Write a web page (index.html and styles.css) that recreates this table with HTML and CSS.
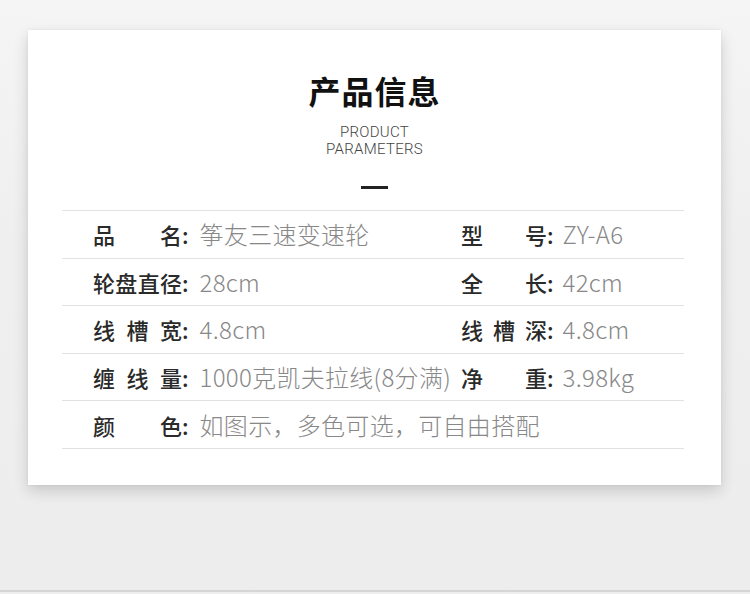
FILE: index.html
```html
<!DOCTYPE html>
<html>

<head>
    <meta charset="utf-8">
    <title>产品信息</title>
    <link rel="stylesheet" href="styles.css">
</head>

<body>
    <div class="page">
        <div class="card">
            <h1 class="title">产品信息</h1>
            <div class="subtitle">PRODUCT<br>PARAMETERS</div>
            <div class="dash"></div>

            <div class="params">
                <div class="row">
                    <div class="cell"><span class="label">品名</span><span class="colon">:</span><span class="value">筝友三速变速轮</span></div>
                    <div class="cell"><span class="label">型号</span><span class="colon">:</span><span class="value">ZY-A6</span></div>
                </div>
                <div class="row">
                    <div class="cell"><span class="label">轮盘直径</span><span class="colon">:</span><span class="value">28cm</span></div>
                    <div class="cell"><span class="label">全长</span><span class="colon">:</span><span class="value">42cm</span></div>
                </div>
                <div class="row">
                    <div class="cell"><span class="label">线槽宽</span><span class="colon">:</span><span class="value">4.8cm</span></div>
                    <div class="cell"><span class="label">线槽深</span><span class="colon">:</span><span class="value">4.8cm</span></div>
                </div>
                <div class="row">
                    <div class="cell"><span class="label">缠线量</span><span class="colon">:</span><span class="value">1000克凯夫拉线(8分满)</span></div>
                    <div class="cell"><span class="label">净重</span><span class="colon">:</span><span class="value">3.98kg</span></div>
                </div>
                <div class="row">
                    <div class="cell wide"><span class="label">颜色</span><span class="colon">:</span><span class="value">如图示，多色可选，可自由搭配</span></div>
                </div>
            </div>
        </div>
    </div>
</body>

</html>
```

FILE: styles.css
```css
html,
body {
    margin: 0;
    padding: 0;
}

body {
    font-family: "Noto Sans CJK SC", "Noto Sans", sans-serif;
    background: #eeeeee;
}

.page {
    height: 592px;
    padding-top: 30px;
    box-sizing: border-box;
    background: linear-gradient(to bottom, #f5f5f5 0%, #efefef 40%, #ededed 100%);
    border-bottom: 2px solid #d6d6d6;
    overflow: hidden;
}

.card {
    width: 693px;
    height: 455px;
    margin-left: 28px;
    background: #fff;
    box-shadow: 0 6px 14px rgba(0, 0, 0, 0.16), 0 0 3px rgba(0, 0, 0, 0.06);
    padding-top: 40px;
    box-sizing: border-box;
    text-align: center;
}

.title {
    margin: 0;
    font-size: 32px;
    line-height: 40px;
    font-weight: 700;
    color: #111;
    letter-spacing: 1px;
}

.subtitle {
    margin-top: 14px;
    font-family: Roboto, "Liberation Sans", sans-serif;
    font-size: 15px;
    line-height: 17px;
    letter-spacing: 0.3px;
    font-weight: 300;
    color: #444;
}

.dash {
    width: 27px;
    height: 3px;
    margin: 28px auto 0;
    background: #222;
}

.params {
    width: 622px;
    margin: 21px 0 0 34px;
    text-align: left;
    border-bottom: 1px solid #e2e2e2;
}

.params .row {
    display: grid;
    grid-template-columns: 367px auto;
    height: 47.6px;
    padding-left: 31px;
    box-sizing: border-box;
    border-top: 1px solid #e2e2e2;
    align-items: center;
}

.params .cell {
    display: flex;
    align-items: center;
    font-size: 22px;
    line-height: 30px;
    white-space: nowrap;
}

.params .cell.wide {
    grid-column: 1 / 3;
}

.params .label {
    display: inline-block;
    width: 89px;
    text-align: justify;
    text-align-last: justify;
    color: #2a2a2a;
    font-weight: 500;
}

.params .cell + .cell .label {
    width: 86px;
    margin-left: 1px;
}

.params .colon {
    color: #2a2a2a;
    font-weight: 500;
}

.params .value {
    margin-left: 11px;
    font-size: 24px;
    letter-spacing: 0.3px;
    color: #888;
    font-weight: 300;
}

.params .cell + .cell .value {
    margin-left: 9px;
}
```
